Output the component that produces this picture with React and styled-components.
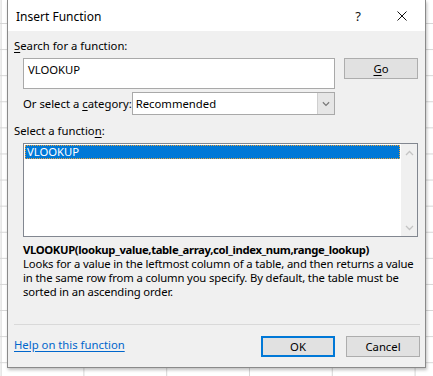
import React from "react";
import styled, { createGlobalStyle } from "styled-components";

const GlobalStyle = createGlobalStyle`
  html, body {
    margin: 0;
    padding: 0;
  }
  body {
    font-family: "Noto Sans", "Liberation Sans", sans-serif;
    font-size: 11.3px;
    color: #000;
  }
`;

// spreadsheet behind the dialog
const Sheet = styled.div`
  width: 433px;
  height: 376px;
  overflow: hidden;
  background-color: #fff;
  background-image:
    linear-gradient(to bottom, #d6d6d6 1px, transparent 1px),
    linear-gradient(to right, #d6d6d6 1px, transparent 1px);
  background-size: 433px 26.1px, 82.8px 376px;
  background-position: 0 23px, 0.6px 0;
  padding-left: 7px;
  box-sizing: border-box;
`;

const Dialog = styled.div`
  width: 419px;
  height: 368px;
  box-sizing: border-box;
  border: 1px solid #8a8a8a;
  border-top: none;
  background: #f0f0f0;
  box-shadow: 1px 2px 3px rgba(0, 0, 0, 0.25);
  display: flex;
  flex-direction: column;
`;

const TitleBar = styled.div`
  height: 31px;
  background: #fff;
  display: flex;
  align-items: center;
  padding-left: 8px;
  flex-shrink: 0;
`;

const Title = styled.span`
  font-size: 12px;
  flex: 1;
  padding-top: 1px;
`;

const TitleButton = styled.span`
  width: 46px;
  display: flex;
  justify-content: center;
  align-items: center;
  font-size: 13px;
  color: #111;
  padding-left: ${(p) => p.$shift || 0}px;
  box-sizing: border-box;
`;

const Body = styled.div`
  flex: 1;
  display: flex;
  flex-direction: column;
  padding: 0 5px 0 6px;
`;

const Label = styled.div`
  line-height: 15px;
  margin-top: ${(p) => p.$top || 0}px;
  white-space: nowrap;
`;

const Key = styled.span`
  text-decoration: underline;
  text-underline-offset: 2px;
`;

const SearchRow = styled.div`
  display: flex;
  align-items: flex-start;
  margin-top: 5px;
  padding-left: 9px;
`;

const SearchInput = styled.div`
  width: 312px;
  height: 31px;
  box-sizing: border-box;
  border: 1px solid #a9a9a9;
  background: #fff;
  padding: 3px 4px;
  line-height: 15px;
`;

const Button = styled.div`
  width: ${(p) => p.$width || 74}px;
  height: 21px;
  box-sizing: border-box;
  border: ${(p) => (p.$primary ? "2px solid #0078d7" : "1px solid #adadad")};
  background: #e1e1e1;
  display: flex;
  align-items: center;
  justify-content: center;
  margin-left: ${(p) => p.$gap || 0}px;
  line-height: 15px;
`;

const CategoryRow = styled.div`
  display: flex;
  align-items: center;
  width: 312px;
  margin: 3px 0 0 9px;
`;

const Select = styled.div`
  width: 205px;
  height: 23px;
  box-sizing: border-box;
  margin-left: auto;
  border: 1px solid #a9a9a9;
  background: #fff;
  display: flex;
`;

const SelectValue = styled.div`
  flex: 1;
  padding: 3px 3px;
  line-height: 15px;
`;

const SelectArrow = styled.div`
  width: 16px;
  background: #e6e6e6;
  border-left: 1px solid #cfcfcf;
  display: flex;
  align-items: center;
  justify-content: center;
`;

const ListBox = styled.div`
  width: 395px;
  height: 94px;
  box-sizing: border-box;
  margin: 5px 0 0 9px;
  border: 1px solid #828790;
  background: #fff;
  display: flex;
`;

const ListItems = styled.div`
  flex: 1;
  padding: 1px 1px;
`;

const ListItem = styled.div`
  height: 14px;
  line-height: 14px;
  padding-left: 2px;
  background: ${(p) => (p.$selected ? "#0078d7" : "transparent")};
  color: ${(p) => (p.$selected ? "#fff" : "#000")};
  outline: ${(p) => (p.$selected ? "1px dotted #e9a23b" : "none")};
  outline-offset: -1px;
`;

const ScrollBar = styled.div`
  width: 16px;
  background: #f0f0f0;
  display: flex;
  flex-direction: column;
  justify-content: space-between;
  align-items: center;
  padding: 6px 0 5px;
`;

const Signature = styled.div`
  margin: 5px 0 0 9px;
  font-weight: bold;
  line-height: 15px;
  letter-spacing: -0.36px;
  white-space: nowrap;
`;

const Description = styled.div`
  margin: 0 0 0 9px;
  line-height: 14px;
  letter-spacing: -0.14px;
  white-space: nowrap;
`;

const Spacer = styled.div`
  flex: 1;
`;

const Separator = styled.div`
  height: 1px;
  background: #d9d9d9;
`;

const Footer = styled.div`
  display: flex;
  align-items: center;
  height: 42px;
`;

const HelpLink = styled.a`
  color: #0066cc;
  text-decoration: underline;
  text-underline-offset: 2px;
  flex: 1;
  margin-top: -3px;
`;

const Chevron = ({ up, color = "#c4c4c4", w = 9 }) => (
  <svg width={w} height="6" viewBox="0 0 9 6">
    <polyline
      points={up ? "1,5 4.5,1.5 8,5" : "1,1 4.5,4.5 8,1"}
      fill="none"
      stroke={color}
      strokeWidth="1.3"
    />
  </svg>
);

const CloseIcon = () => (
  <svg width="10" height="10" viewBox="0 0 10 10">
    <path d="M0.5 0.5 L9.5 9.5 M9.5 0.5 L0.5 9.5" stroke="#111" strokeWidth="1" />
  </svg>
);

export default function App() {
  return (
    <>
      <GlobalStyle />
      <Sheet>
        <Dialog>
          <TitleBar>
            <Title>Insert Function</Title>
            <TitleButton $shift={4}>?</TitleButton>
            <TitleButton>
              <CloseIcon />
            </TitleButton>
          </TitleBar>
          <Body>
            <Label $top={7}>
              <Key>S</Key>earch for a function:
            </Label>
            <SearchRow>
              <SearchInput>VLOOKUP</SearchInput>
              <Button $gap={9}>
                <span>
                  <Key>G</Key>o
                </span>
              </Button>
            </SearchRow>
            <CategoryRow>
              <Label>
                Or select a <Key>c</Key>ategory:
              </Label>
              <Select>
                <SelectValue>Recommended</SelectValue>
                <SelectArrow>
                  <Chevron color="#777" w={8} />
                </SelectArrow>
              </Select>
            </CategoryRow>
            <Label $top={8}>
              Select a functio<Key>n</Key>:
            </Label>
            <ListBox>
              <ListItems>
                <ListItem $selected>VLOOKUP</ListItem>
              </ListItems>
              <ScrollBar>
                <Chevron up />
                <Chevron />
              </ScrollBar>
            </ListBox>
            <Signature>
              VLOOKUP(lookup_value,table_array,col_index_num,range_lookup)
            </Signature>
            <Description>
              Looks for a value in the leftmost column of a table, and then returns a value
              <br />
              in the same row from a column you specify. By default, the table must be
              <br />
              sorted in an ascending order.
            </Description>
            <Spacer />
            <Separator />
            <Footer>
              <HelpLink href="#">Help on this function</HelpLink>
              <Button $primary>OK</Button>
              <Button $gap={11}>Cancel</Button>
            </Footer>
          </Body>
        </Dialog>
      </Sheet>
    </>
  );
}
